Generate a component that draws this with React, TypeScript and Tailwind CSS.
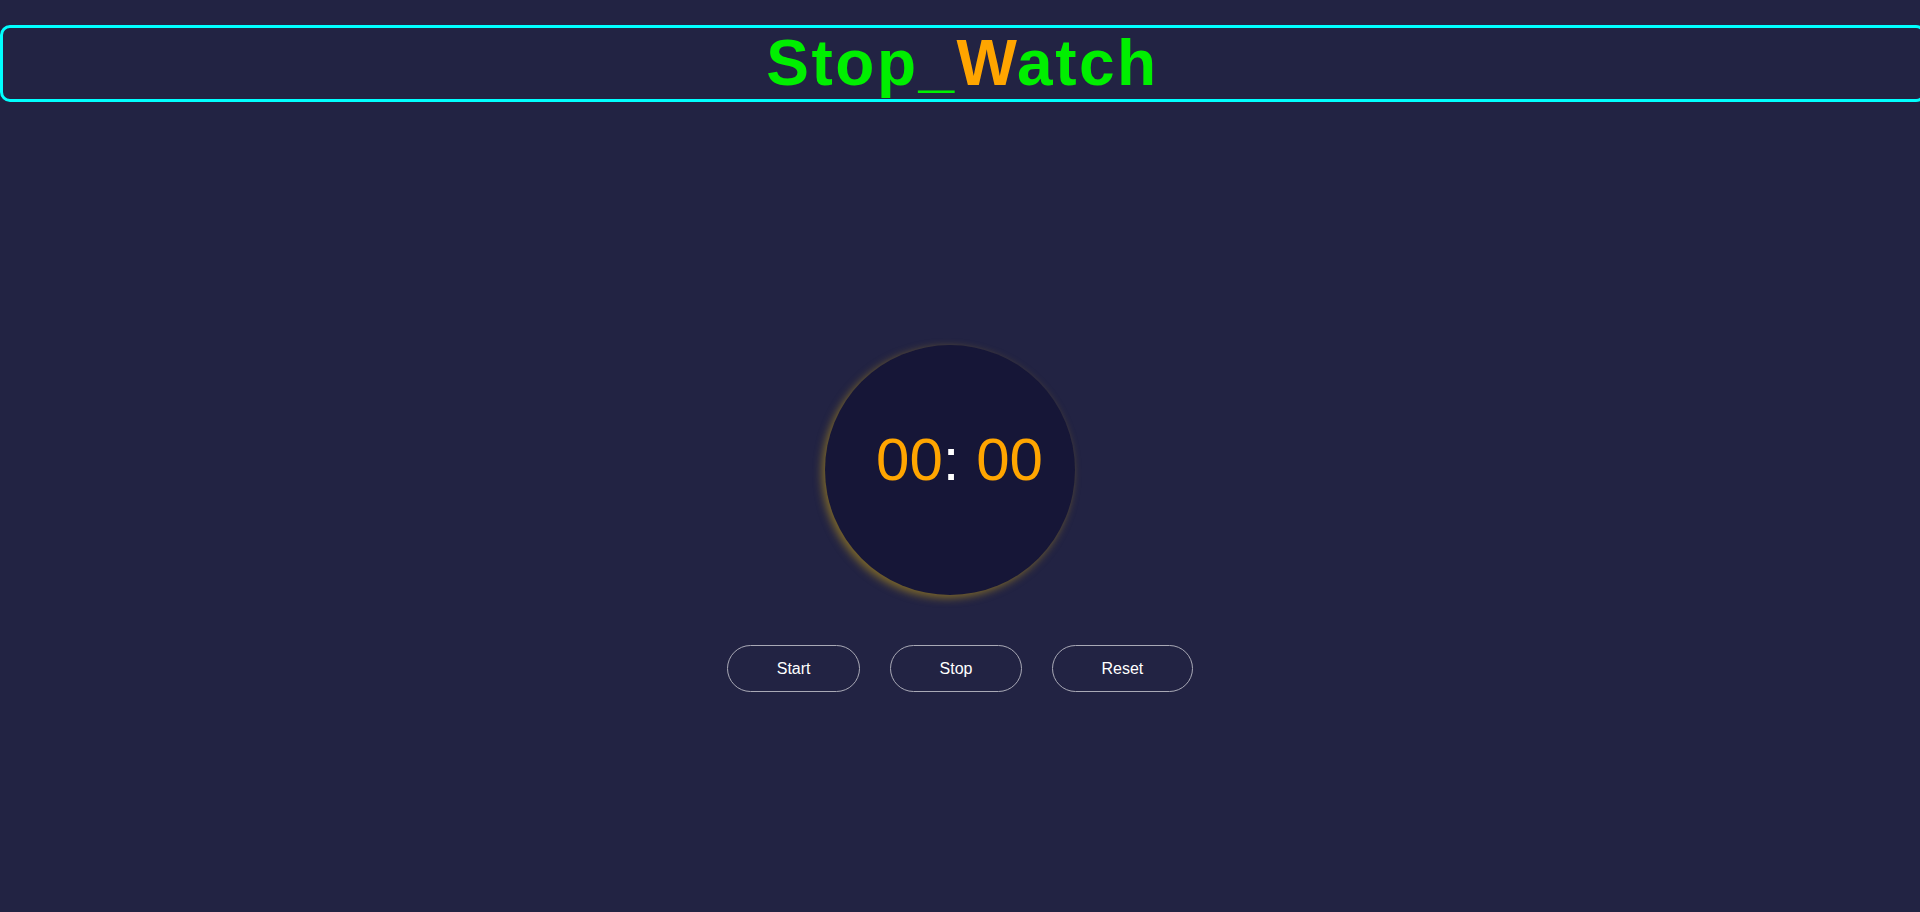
export default function App() {
  return (
    <div className="bg-[#222343] min-h-screen w-full font-['Liberation_Sans',Arial,sans-serif] text-white overflow-hidden">
      {/* Title bar */}
      <header className="pt-[25px]">
        <div className="w-[calc(100%+6px)] h-[77px] border-[3px] border-[#00ffff] rounded-[10px] flex items-center justify-center">
          <h1 className="text-[64px] leading-none font-bold tracking-[2.5px] text-[#00ef00] mt-[-2px] mr-[1px]">
            Stop_<span className="text-[#ffa500]">W</span>atch
          </h1>
        </div>
      </header>

      <main className="flex flex-col items-center pt-[243px]">
        {/* Dial */}
        <div className="w-[250px] h-[250px] mr-[20px] rounded-full bg-[#161637] shadow-[-3px_3px_8px_rgba(200,160,20,0.55)] flex items-center justify-center">
          <div className="text-[60px] leading-none text-[#ffa500] mt-[-20px] ml-[19px]">
            00<span className="text-white">:</span> 00
          </div>
        </div>

        {/* Controls */}
        <div className="flex gap-[30px] mt-[50px]">
          <button className="h-[47px] px-[48.5px] rounded-full border border-[#a9a9b6] text-white text-[16px]">
            Start
          </button>
          <button className="h-[47px] px-[48.5px] rounded-full border border-[#a9a9b6] text-white text-[16px]">
            Stop
          </button>
          <button className="h-[47px] px-[48.5px] rounded-full border border-[#a9a9b6] text-white text-[16px]">
            Reset
          </button>
        </div>
      </main>
    </div>
  )
}
